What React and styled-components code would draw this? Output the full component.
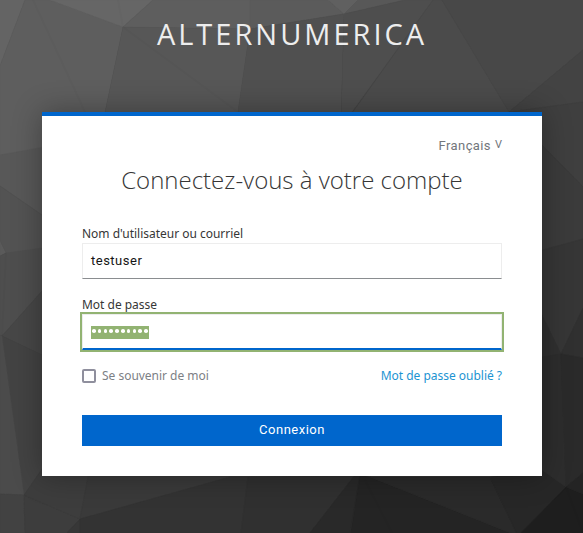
import React from "react";
import styled, { createGlobalStyle } from "styled-components";

const GlobalStyle = createGlobalStyle`
  * { box-sizing: border-box; }
  html, body { margin: 0; padding: 0; background: #393939; }
  body { font-family: "Open Sans", sans-serif; overflow: hidden; }
`;

const Page = styled.main`
  position: relative;
  width: 583px;
  height: 533px;
  overflow: hidden;
  isolation: isolate;
  display: flex;
  flex-direction: column;
  align-items: center;
`;

const Backdrop = styled.svg`
  position: absolute;
  inset: 0;
  z-index: -1;
`;

const Brand = styled.header`
  height: 112px;
  padding: 14px 0 0 1px;
  font-size: 29px;
  line-height: 40px;
  letter-spacing: 3px;
  text-transform: uppercase;
  white-space: nowrap;
  color: #ededed;
`;

const Card = styled.section`
  width: 500px;
  height: 364px;
  margin-left: 1px;
  padding: 19px 40px 30px;
  border-top: 4px solid #0066cc;
  background: #fff;
  box-shadow: 0 0 28px rgba(3, 3, 3, 0.32);
`;

const Locale = styled.div`
  display: flex;
  justify-content: flex-end;
  align-items: flex-start;
  gap: 4px;
  height: 20px;
  font: 13px/21px Roboto, sans-serif;
  letter-spacing: 0.4px;
  color: #72767b;
`;

const Caret = styled.span`
  font-size: 11px;
  line-height: 20px;
  letter-spacing: 0;
`;

const Title = styled.h1`
  margin: 8px 0 0;
  text-align: center;
  font-size: 24px;
  line-height: 33px;
  font-weight: 300;
  white-space: nowrap;
  color: #363636;
`;

const Form = styled.form`
  display: flex;
  flex-direction: column;
  margin-top: 29px;
`;

const Label = styled.label`
  height: 18px;
  font: 12px/18px "Noto Sans", sans-serif;
  letter-spacing: -0.02px;
  color: #363636;
`;

const Field = styled.div`
  display: flex;
  align-items: center;
  height: 36px;
  margin-bottom: 17px;
  padding: 0 8px;
  border: 1px solid #ededed;
  border-bottom: ${(p) => (p.$focused ? "2px solid #0066cc" : "1px solid #8a8d90")};
  outline: ${(p) => (p.$focused ? "2px solid #92b372" : "none")};
  font: 13px/20px Roboto, sans-serif;
  letter-spacing: 0.5px;
  color: #151515;
`;

const Selected = styled.span`
  display: flex;
  align-items: center;
  justify-content: space-around;
  height: 13px;
  width: 58px;
  margin-top: 2px;
  padding-bottom: 3px;
  background: #92b372;
`;

const Dot = styled.i`
  width: 3.6px;
  height: 3.6px;
  border-radius: 50%;
  background: #fff;
`;

const Options = styled.div`
  display: flex;
  align-items: center;
  height: 18px;
  font: 12px/18px "Noto Sans", sans-serif;
  letter-spacing: -0.02px;
  color: #7c8085;
`;

const Checkbox = styled.span`
  width: 14px;
  height: 14px;
  margin-right: 6px;
  border: 2px solid #8f8f9d;
  border-radius: 2px;
`;

const Forgot = styled.a`
  margin-left: auto;
  color: #1c94d2;
`;

const Submit = styled.button`
  height: 31px;
  margin-top: 30px;
  padding: 0 0 1px;
  border: 0;
  background: #0066cc;
  color: #fff;
  font: 13px/20px Roboto, sans-serif;
  letter-spacing: 0.5px;
`;

const facets = [
  ["0,0 25,0 0,66", "#646464"],
  ["25,0 50,0 123,27 105,112 105,150 0,155 0,66", "#5e5e5e"],
  ["50,0 153,0 123,27", "#666"],
  ["153,0 250,0 250,29 123,27", "#5e5e5e"],
  ["250,0 328,0 344,14 250,29", "#5b5b5b"],
  ["328,0 358,0 344,14", "#606060"],
  ["358,0 405,0 344,14", "#585858"],
  ["123,27 250,29 238,112 220,160 95,160", "#575757"],
  ["250,29 344,14 341,112 341,160 231,160", "#505050"],
  ["344,14 405,0 433,0 352,112 341,130", "#4e4e4e"],
  ["433,0 442,0 509,112 340,130", "#4b4b4b"],
  ["442,0 583,0 583,50 509,112", "#484848"],
  ["509,112 583,50 583,102", "#434343"],
  ["509,112 583,102 583,187 542,145", "#3f3f3f"],
  ["509,112 542,145 583,187 583,239 542,250 500,262", "#3b3b3b"],
  ["0,155 105,136 105,260 42,215 0,186", "#585858"],
  ["0,186 42,215 105,260 6,253 0,241", "#535353"],
  ["0,241 6,253 0,256", "#5a5a5a"],
  ["0,256 6,253 42,248 105,242 42,291 2,336 0,335", "#4e4e4e"],
  ["2,336 105,220 105,385", "#474747"],
  ["2,336 42,355 100,383 24,495", "#434343"],
  ["0,335 2,336 24,495 0,494", "#4b4b4b"],
  ["0,494 24,495 25,533 0,533", "#424242"],
  ["24,495 80,519 67,533 25,533", "#3d3d3d"],
  ["24,495 100,388 88,477 80,519", "#3d3d3d"],
  ["80,519 88,477 100,388 310,450 230,477", "#3a3a3a"],
  ["80,519 80,533 67,533", "#373737"],
  ["80,519 230,477 248,477 241,533 80,533", "#333"],
  ["248,477 355,475 310,533 241,533", "#303030"],
  ["355,475 360,475 350,533 310,533", "#292929"],
  ["360,475 370,477 518,536 350,536", "#242424"],
  ["370,477 490,477 518,536", "#2a2a2a"],
  ["490,477 542,470 566,487 518,536", "#272727"],
  ["566,487 583,494 583,533 518,536", "#1e1e1e"],
  ["500,262 583,239 583,308 561,354 542,315", "#363636"],
  ["542,315 561,354 542,357 500,364", "#303030"],
  ["583,308 583,358 561,354", "#303030"],
  ["542,357 561,354 566,487 542,470 500,440", "#2d2d2d"],
  ["561,354 583,358 583,473 566,487", "#2a2a2a"],
  ["566,487 583,473 583,494", "#242424"],
];

const creases = "M33 0L85 112M118 0L123 27L238 112M6 253L2 336M365 480L392 533M566 487L583 533";

export default function App() {
  return (
    <>
      <GlobalStyle />
      <Page>
        <Backdrop width="583" height="533" viewBox="0 0 583 533" aria-hidden="true">
          <rect width="583" height="533" fill="#393939" />
          {facets.map(([points, fill]) => (
            <polygon key={points} points={points} fill={fill} stroke={fill} strokeWidth=".5" />
          ))}
          <path d={creases} fill="none" stroke="#000" strokeOpacity=".02" strokeWidth="2" />
        </Backdrop>
        <Brand>Alternumerica</Brand>
        <Card>
          <Locale>
            <span>Français</span>
            <Caret>V</Caret>
          </Locale>
          <Title>Connectez-vous à votre compte</Title>
          <Form>
            <Label>Nom d'utilisateur ou courriel</Label>
            <Field>testuser</Field>
            <Label>Mot de passe</Label>
            <Field $focused>
              <Selected>
                {Array.from({ length: 10 }, (_, i) => (
                  <Dot key={i} />
                ))}
              </Selected>
            </Field>
            <Options>
              <Checkbox />
              <span>Se souvenir de moi</span>
              <Forgot>Mot de passe oublié ?</Forgot>
            </Options>
            <Submit type="button">Connexion</Submit>
          </Form>
        </Card>
      </Page>
    </>
  );
}
